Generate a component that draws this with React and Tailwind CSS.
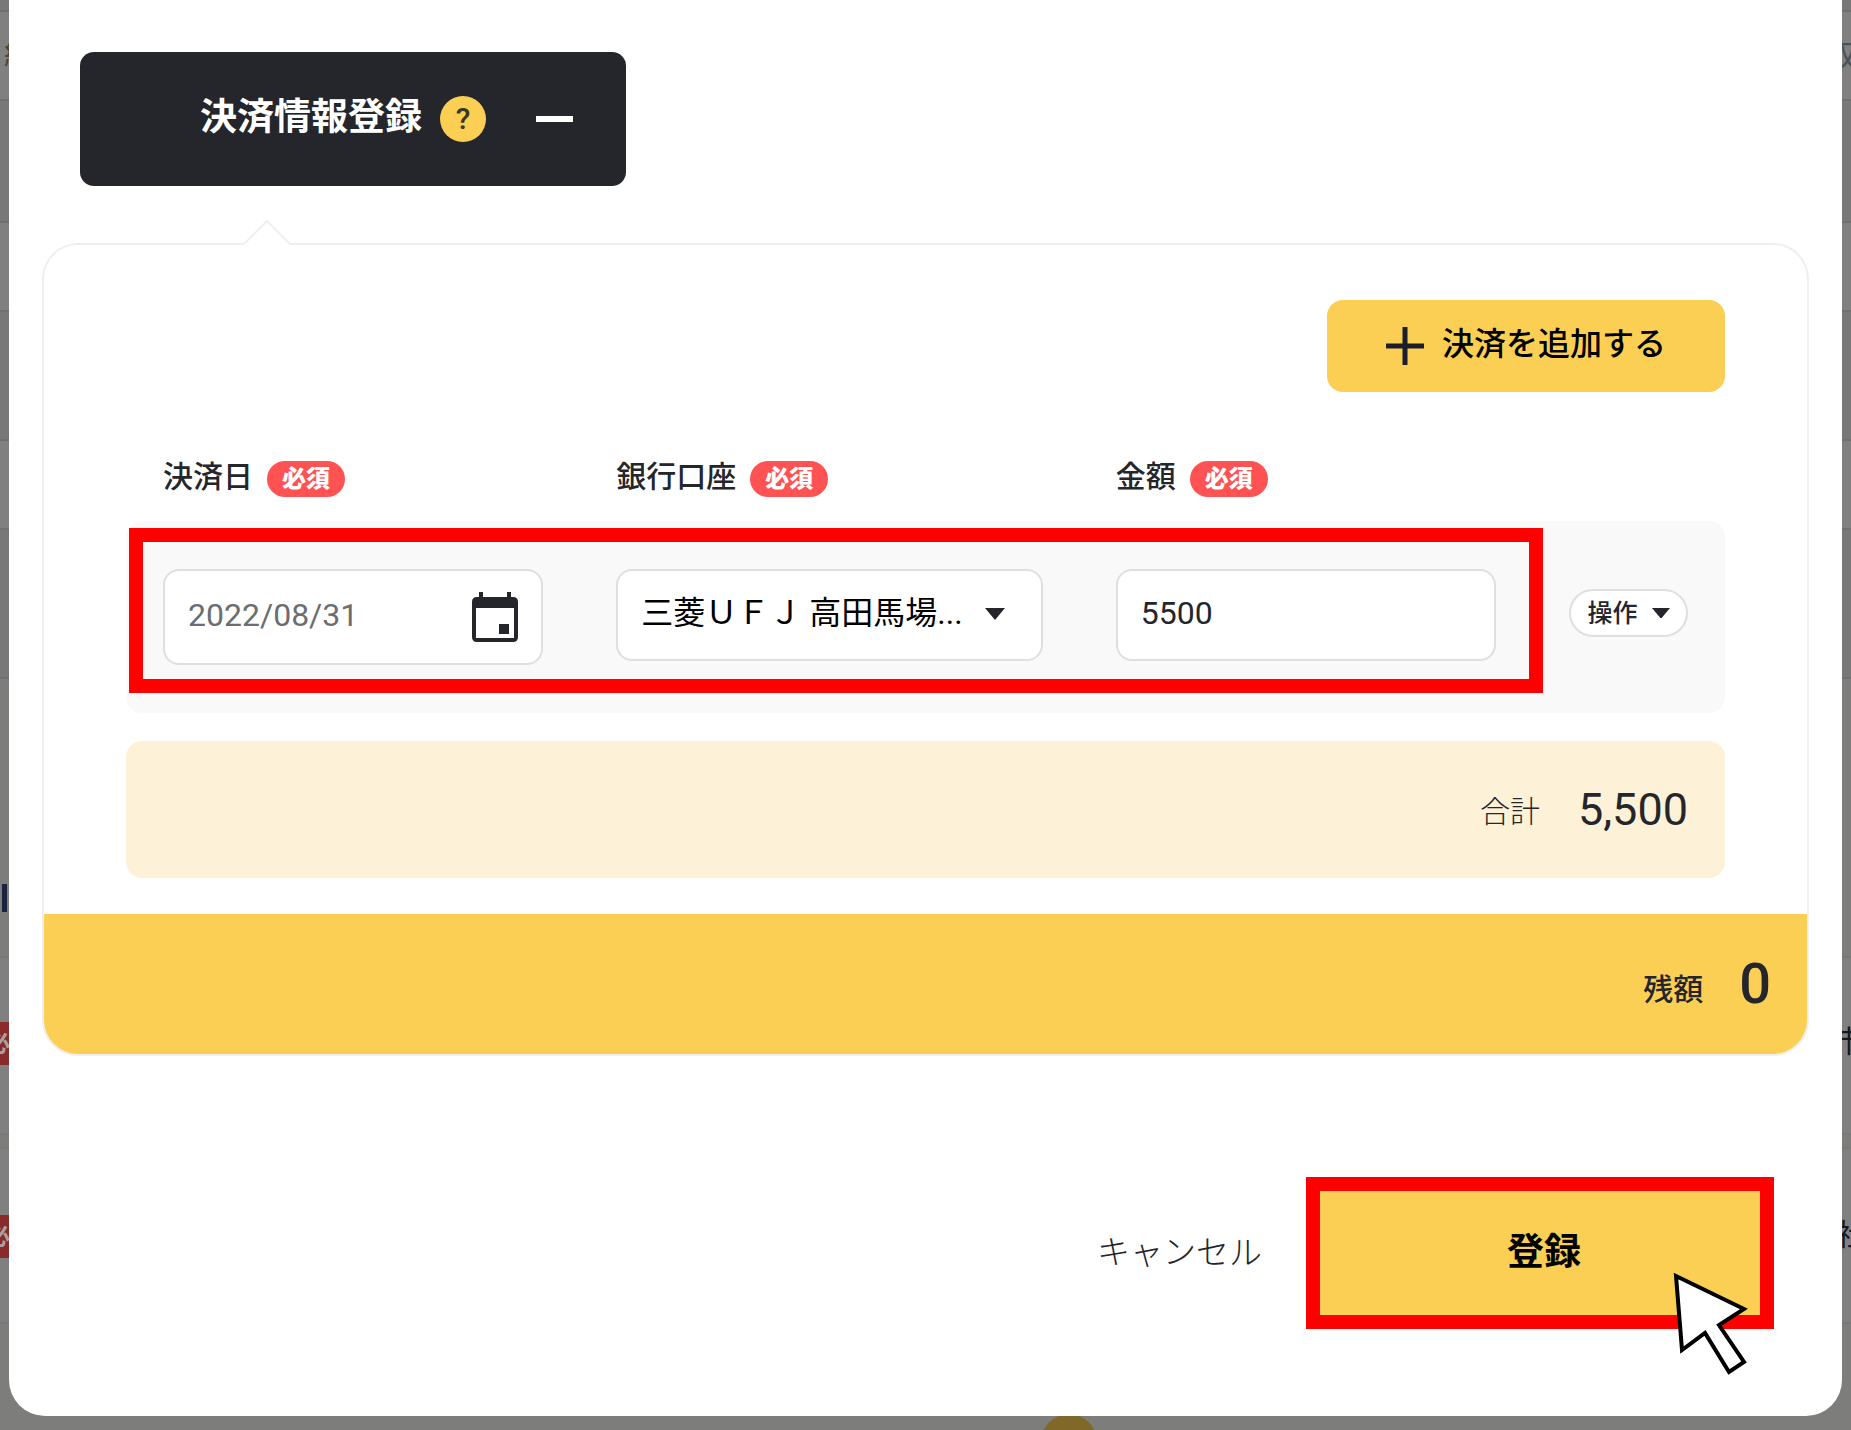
import React, { useState } from "react";

const bands = [
  "h-[12px] bg-[#787878]",
  "h-[89px] bg-[#808080]",
  "h-[122px] bg-[#787878]",
  "h-[89px] bg-[#808080]",
  "h-[129px] bg-[#787878]",
  "h-[89px] bg-[#808080]",
  "h-[149px] bg-[#787878]",
];

const Required = () => (
  <span className="flex h-9 items-center rounded-full bg-[#ff5252] px-[15px] text-2xl leading-none font-black text-white">
    必須
  </span>
);

const FieldLabel = ({ htmlFor, children }) => (
  <div className="flex items-center gap-[14px]">
    <label htmlFor={htmlFor} className="pb-1 text-3xl leading-8 font-medium">
      {children}
    </label>
    <Required />
  </div>
);

const Caret = ({ className }) => (
  <svg viewBox="0 0 20 12" className={className} aria-hidden="true">
    <path d="M0 0h20L10 12z" fill="#24262c" />
  </svg>
);

const CalendarIcon = () => (
  <svg viewBox="0 0 48 52" className="h-[52px] w-12" aria-hidden="true">
    <path
      fill="#24262c"
      fillRule="evenodd"
      d="M8 1h4v5h24V1h4v5h2q5 0 5 5v35q0 5-5 5H6q-5 0-5-5V11q0-5 5-5h2zM5 17v30h38V17z"
    />
    <path fill="#24262c" d="M28 33h10v10H28z" />
  </svg>
);

const Backdrop = () => (
  <div
    className="absolute inset-0 overflow-hidden bg-[#7d7d7b]"
    aria-hidden="true"
  >
    {bands.map((band, i) => (
      <div key={i} className={`${band} border-b-2 border-[#707070]`} />
    ))}
    <div className="h-[277px]" />
    <div className="h-[177px] border-t-2 border-[#787875] bg-[#808080]" />
    <div className="h-4 border-y-2 border-[#787875]" />
    <div className="h-[175px] border-b-2 border-[#787875] bg-[#808080]" />
    <span className="absolute top-[38px] left-1 text-3xl text-[#4f4436]">
      給
    </span>
    <span className="absolute top-[38px] left-[1827px] text-3xl text-[#4a525c]">
      収
    </span>
    <span className="absolute top-[884px] left-[2px] h-7 w-[5px] bg-[#1b2340]" />
    <span className="absolute top-[1022px] -left-[14px] flex h-[43px] items-center bg-[#8a2b2b] text-2xl font-bold text-[#a9a0a0]">
      必
    </span>
    <span className="absolute top-[1215px] -left-[14px] flex h-[43px] items-center bg-[#8a2b2b] text-2xl font-bold text-[#a9a0a0]">
      必
    </span>
    <span className="absolute top-[1024px] left-[1834px] text-3xl text-[#16181c]">
      市
    </span>
    <span className="absolute top-[1217px] left-[1836px] text-3xl text-[#16181c]">
      社
    </span>
    <span className="absolute top-[1414px] left-[1041px] size-[56px] rounded-full bg-[#7f6828]" />
  </div>
);

const App = () => {
  const [date, setDate] = useState("2022/08/31");
  const [amount, setAmount] = useState("5500");

  return (
    <div className="relative min-h-screen bg-[#7d7d7b] px-[9px] pb-[14px] font-['Roboto','Noto_Sans_CJK_JP',sans-serif] text-[#24262c]">
      <Backdrop />
      <main className="relative rounded-b-[36px] bg-white px-[33px] pt-[52px] pb-[87px]">
        <button className="ml-[38px] flex h-[134px] w-[546px] items-center rounded-[14px] bg-[#24262c] pl-[120px] text-white">
          <span className="pb-1 text-[37px] leading-none font-bold">
            決済情報登録
          </span>
          <span className="ml-[18px] flex size-[46px] items-center justify-center rounded-full bg-[#fbcf53] text-3xl leading-none font-medium text-[#3c3622]">
            ?
          </span>
          <span className="ml-[50px] h-[6px] w-[37px] bg-white" />
        </button>

        <section className="relative mt-[57px] rounded-[36px] border-2 border-[#efefef]">
          <svg
            viewBox="0 0 48 26"
            className="absolute -top-[25px] left-[199px] h-[26px] w-12"
            aria-hidden="true"
          >
            <path d="M1 24L24 1l23 23v2H1z" fill="#fff" />
            <path
              d="M1 24L24 1l23 23"
              fill="none"
              stroke="#efefef"
              strokeWidth="2"
            />
          </svg>

          <div className="px-[82px] pt-[55px] pb-9">
            <div className="flex justify-end">
              <button className="flex h-[92px] w-[398px] items-center justify-center gap-[18px] rounded-2xl bg-[#fbcf53] text-black">
                <svg
                  viewBox="0 0 38 38"
                  className="size-[38px]"
                  aria-hidden="true"
                >
                  <path d="M19 0v38M0 19h38" stroke="#1c1f2b" strokeWidth="5" />
                </svg>
                <span className="pb-1 text-[32px] leading-none font-medium">
                  決済を追加する
                </span>
              </button>
            </div>

            <div className="mt-[69px] grid grid-cols-[380fr_426fr_380fr_119px] gap-x-[73px] px-[37px]">
              <FieldLabel htmlFor="date">決済日</FieldLabel>
              <FieldLabel htmlFor="bank">銀行口座</FieldLabel>
              <FieldLabel htmlFor="amount">金額</FieldLabel>
            </div>

            <div className="relative mt-6 grid grid-cols-[380fr_426fr_380fr_119px] items-start gap-x-[73px] rounded-2xl bg-[#f9f9f9] px-[37px] pt-12 pb-12">
              <div className="flex h-24 items-center rounded-2xl border-2 border-[#dfdfdf] bg-white pr-[22px] pl-[23px]">
                <input
                  id="date"
                  value={date}
                  onChange={(e) => setDate(e.target.value)}
                  className="w-full min-w-0 pb-1 text-[32px] leading-10 text-[#6b6d70] outline-none"
                />
                <button aria-label="カレンダー">
                  <CalendarIcon />
                </button>
              </div>
              <div className="relative">
                <select
                  id="bank"
                  className="h-[92px] w-full appearance-none rounded-2xl border-2 border-[#dfdfdf] bg-white pr-16 pb-1 pl-[23px] text-[32px] text-black"
                >
                  <option>三菱ＵＦＪ 高田馬場...</option>
                </select>
                <Caret className="pointer-events-none absolute top-[39px] right-[38px] w-5" />
              </div>
              <input
                id="amount"
                value={amount}
                onChange={(e) => setAmount(e.target.value)}
                className="h-[92px] w-full min-w-0 rounded-2xl border-2 border-[#dfdfdf] bg-white px-[23px] pb-1 text-[32px]"
              />
              <button className="mt-5 flex h-12 items-center justify-center gap-[14px] rounded-full border-2 border-[#dfdfdf] bg-white text-[25px] leading-none font-medium">
                操作
                <Caret className="w-[18px]" />
              </button>
              <div className="pointer-events-none absolute top-[7px] right-[182px] bottom-5 left-[3px] border-[14px] border-[#ff0000]" />
            </div>

            <div className="mt-7 flex h-[137px] items-center justify-end gap-[38px] rounded-2xl bg-[#fdf2d8] pr-[37px]">
              <span className="pt-1 text-3xl font-light">合計</span>
              <span className="text-[45px]">5,500</span>
            </div>
          </div>

          <div className="flex h-[140px] items-center justify-end gap-9 rounded-b-[34px] bg-[#fbcf53] pr-9">
            <span className="pt-3 text-3xl font-medium">残額</span>
            <span className="text-[56px] font-medium">0</span>
          </div>
        </section>

        <div className="mt-[121px] flex items-center justify-end gap-11 pr-[35px]">
          <button className="text-[33px] font-light">キャンセル</button>
          <div className="relative">
            <button className="h-[152px] w-[468px] border-[14px] border-[#ff0000] bg-[#fbcf53] pl-2 text-[37px] font-bold text-black">
              登録
            </button>
            <svg
              viewBox="0 0 76 106"
              className="absolute top-[93px] left-[366px] h-[106px] w-[76px]"
              aria-hidden="true"
            >
              <path
                d="M4 6L72 39 47 55l25 37-15 10-24-39-23 17z"
                fill="#fff"
                stroke="#000"
                strokeWidth="4"
              />
            </svg>
          </div>
        </div>
      </main>
    </div>
  );
};

export default App;
